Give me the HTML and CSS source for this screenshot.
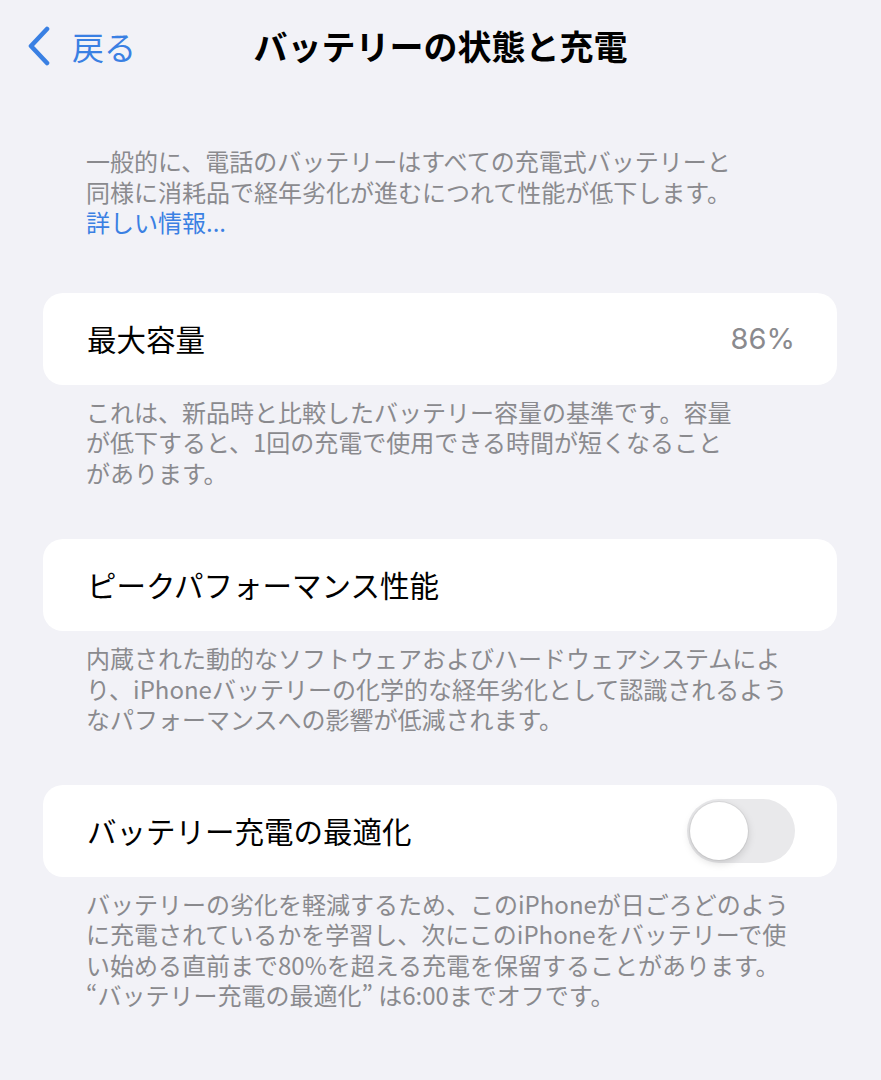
FILE: index.html
```html
<!DOCTYPE html>
<html lang="ja">
<head>
<meta charset="utf-8">
<title>バッテリーの状態と充電</title>
<link rel="stylesheet" href="styles.css">
</head>
<body>
<header class="nav">
  <div class="nav-left">
    <svg class="chev" width="26" height="40" viewBox="0 0 26 40" aria-hidden="true">
      <path d="M21 3 L5 20 L21 37" fill="none" stroke="#3a80e3" stroke-width="4.6" stroke-linecap="round" stroke-linejoin="round"/>
    </svg>
    <span class="back">戻る</span>
  </div>
  <h1 class="title">バッテリーの状態と充電</h1>
  <div class="nav-right"></div>
</header>
<main class="content">
  <p class="intro">一般的に、電話のバッテリーはすべての充電式バッテリーと<br>同様に消耗品で経年劣化が進むにつれて性能が低下します。<br><span class="link">詳しい情報...</span></p>

  <section class="card card-1">
    <span class="label">最大容量</span>
    <span class="value">86%</span>
  </section>
  <p class="footer">これは、新品時と比較したバッテリー容量の基準です。容量<br>が低下すると、1回の充電で使用できる時間が短くなること<br>があります。</p>

  <section class="card card-2">
    <span class="label">ピークパフォーマンス性能</span>
  </section>
  <p class="footer">内蔵された動的なソフトウェアおよびハードウェアシステムによ<br>り、iPhoneバッテリーの化学的な経年劣化として認識されるよう<br>なパフォーマンスへの影響が低減されます。</p>

  <section class="card card-3">
    <span class="label">バッテリー充電の最適化</span>
    <span class="toggle"><span class="knob"></span></span>
  </section>
  <p class="footer">バッテリーの劣化を軽減するため、このiPhoneが日ごろどのよう<br>に充電されているかを学習し、次にこのiPhoneをバッテリーで使<br>い始める直前まで80%を超える充電を保留することがあります。<br>“バッテリー充電の最適化” は6:00までオフです。</p>
</main>
</body>
</html>
```

FILE: styles.css
```css
* { box-sizing: border-box; }
html, body {
  margin: 0;
  padding: 0;
  background: #f2f2f7;
}
body {
  width: 881px;
  height: 1080px;
  overflow: hidden;
  font-family: "Inter", "Noto Sans CJK JP", sans-serif;
  color: #000;
}
.nav {
  height: 92px;
  display: grid;
  grid-template-columns: 1fr auto 1fr;
  align-items: center;
  padding: 0 26px;
}
.nav-left {
  display: flex;
  align-items: center;
  gap: 20px;
}
.chev { display: block; }
.back {
  font-family: "Noto Sans CJK JP", sans-serif;
  font-size: 32px;
  color: #3a80e3;
  line-height: 1;
}
.title {
  margin: 0;
  font-family: "Noto Sans CJK JP", sans-serif;
  font-size: 34px;
  font-weight: 700;
  line-height: 1;
}
.content {
  padding: 0 44px 0 43px;
}
.intro, .footer {
  margin: 0;
  padding-left: 43px;
  font-family: "Noto Sans CJK JP", sans-serif;
  font-size: 24px;
  line-height: 30.5px;
  color: #8a8a8e;
  white-space: nowrap;
}
.intro {
  margin-top: 54px;
}
.link { color: #3a80e3; }
.card {
  background: #fff;
  border-radius: 20px;
  height: 92px;
  display: flex;
  align-items: center;
  justify-content: space-between;
  padding: 0 42px 0 44px;
}
.card-1 { margin-top: 55px; }
.card-2 { margin-top: 51px; }
.card-3 { margin-top: 50px; }
.footer {
  margin-top: 12px;
}
.label {
  font-family: "Noto Sans CJK JP", sans-serif;
  font-size: 29.5px;
  line-height: 1;
}
.value {
  font-size: 29px;
  color: #8a8a8e;
  line-height: 1;
}
.toggle {
  width: 108px;
  height: 64px;
  border-radius: 32px;
  background: #e9e9eb;
  display: flex;
  align-items: center;
  padding-left: 3px;
}
.knob {
  width: 58px;
  height: 58px;
  border-radius: 50%;
  background: #fff;
  box-shadow: 0 3px 8px rgba(0,0,0,0.15), 0 0 0 1px rgba(0,0,0,0.05);
}
```
